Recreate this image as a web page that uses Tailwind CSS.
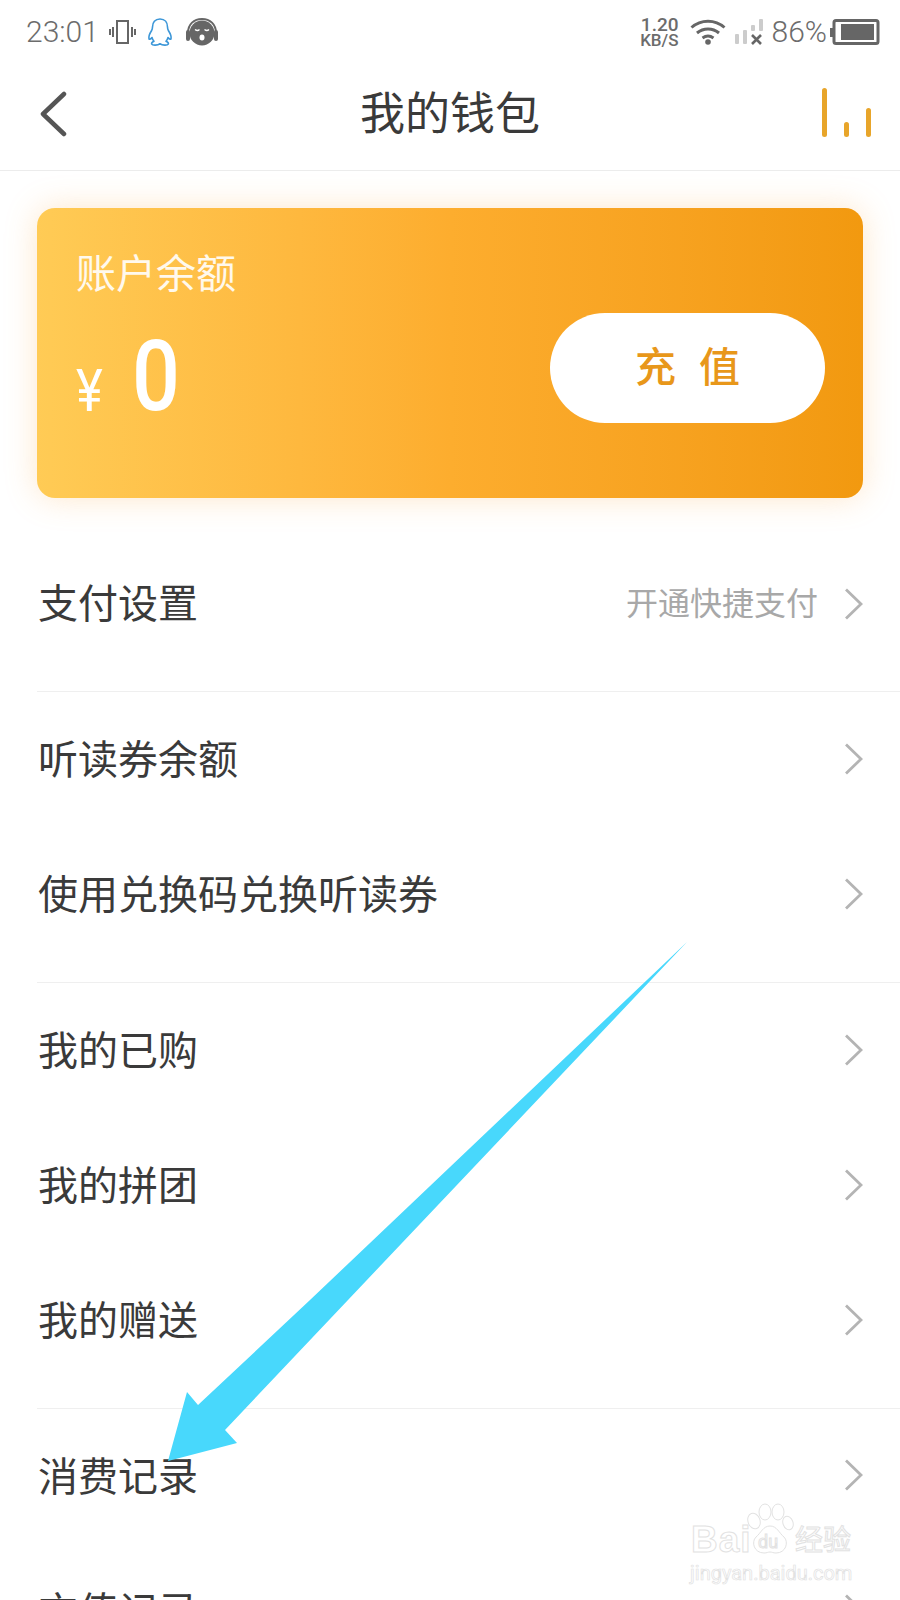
<!DOCTYPE html>
<html lang="zh">
<head>
  <meta charset="UTF-8" />
  <title>我的钱包</title>
  <script src="https://cdn.jsdelivr.net/npm/@tailwindcss/browser@4"></script>
</head>
<body class="bg-white">
<div class="relative w-[900px] h-[1600px] overflow-hidden bg-white text-[#3a3a3a] font-['Roboto','Noto_Sans_CJK_SC',sans-serif]">

  <!-- status bar -->
  <div class="h-[60px] flex items-center justify-between pl-[26px] pr-[20px] pt-[4px] text-[#6c6c6c]">
    <div class="flex items-center">
      <span class="text-[30px] font-light leading-none w-[83px]">23:01</span>
      <svg class="w-[27px] h-[24px]" viewBox="0 0 27 24" fill="none" stroke="#666" stroke-width="2">
        <rect x="8" y="1" width="11" height="22"/>
        <path d="M4 7v10M1 9v6M23 7v10M26 9v6"/>
      </svg>
      <svg class="w-[26px] h-[29px] ml-[11px]" viewBox="0 0 26 29" fill="none" stroke="#3d97d8" stroke-width="1.6" stroke-linejoin="round">
        <path d="M13 1c-5 0-7.500 3.500-7.500 8 0 1.500-.3 2.500-1 3.800-1.500 2.300-3 5.500-2.500 8 .5 1 2 .2 3-1.300.4 1.500 1 2.700 2 3.700-1.600.7-2.800 1.700-2.300 3 .8 1.300 6 1.300 8.300-.5 2.300 1.800 7.500 1.800 8.300.5.500-1.300-.7-2.300-2.300-3 1-1 1.600-2.200 2-3.700 1 1.500 2.500 2.300 3 1.300.5-2.500-1-5.700-2.500-8-.7-1.300-1-2.300-1-3.800 0-4.500-2.500-8-7.500-8z"/>
      </svg>
      <svg class="w-[32px] h-[28px] ml-[13px]" viewBox="0 0 32 28">
        <path d="M2 15C2 6 8 1 16 1s14 5 14 14" fill="none" stroke="#666" stroke-width="2"/>
        <rect x="0" y="12" width="4" height="11" rx="2" fill="#666"/>
        <rect x="28" y="12" width="4" height="11" rx="2" fill="#666"/>
        <circle cx="16" cy="15" r="12.500" fill="#666"/>
        <path d="M9 11.500q2.500 2 4.500 0M18.500 11.500q2.500 2 4.500 0" fill="none" stroke="#fff" stroke-width="1.300"/>
        <ellipse cx="16" cy="19.500" rx="2.500" ry="3" fill="#fff"/>
      </svg>
    </div>
    <div class="flex items-center">
      <div class="flex flex-col items-end font-medium mr-[11px]">
        <span class="text-[19px] leading-[16px]">1.20</span>
        <span class="text-[17px] leading-[15px]">KB/S</span>
      </div>
      <svg class="w-[36px] h-[26px]" viewBox="0 0 36 26" fill="none" stroke="#666" stroke-width="3">
        <path d="M1.500 8.500C11 0 25 0 34.500 8.500M7 14c6.500-5.500 15.500-5.500 22 0M12.500 19c3.500-2.500 7.500-2.500 11 0"/>
        <circle cx="18" cy="23" r="2.800" fill="#666" stroke="none"/>
      </svg>
      <svg class="w-[28px] h-[26px] ml-[9px]" viewBox="0 0 28 26">
        <rect x="0" y="15" width="4" height="10" rx="1" fill="#ccc"/>
        <rect x="8" y="11" width="4" height="14" rx="1" fill="#ccc"/>
        <rect x="16" y="6" width="4" height="6" rx="1" fill="#ccc"/>
        <rect x="24" y="0" width="4" height="12" rx="1" fill="#ccc"/>
        <path d="M17 16l9 9M26 16l-9 9" stroke="#666" stroke-width="2.600"/>
      </svg>
      <span class="text-[30px] font-light leading-none ml-[9px]">86%</span>
      <svg class="w-[50px] h-[26px] ml-[3px]" viewBox="0 0 50 26">
        <rect x="0" y="9" width="3" height="9" fill="#666"/>
        <rect x="4" y="1.500" width="44" height="23" rx="2" fill="none" stroke="#666" stroke-width="3"/>
        <rect x="11" y="5" width="33" height="16" fill="#666"/>
      </svg>
    </div>
  </div>

  <!-- nav -->
  <div class="h-[111px] border-b border-[#ececec] grid grid-cols-3 items-center px-[29px]">
    <svg class="w-[27px] h-[46px] ml-[11px] -mt-[2px]" viewBox="0 0 27 46" fill="none" stroke="#555" stroke-width="4.500" stroke-linecap="round" stroke-linejoin="round">
      <path d="M24 3L3 23l21 20"/>
    </svg>
    <h1 class="text-[45px] font-normal text-center whitespace-nowrap leading-none -mt-[1px]">我的钱包</h1>
    <div class="flex justify-end items-end gap-[17px] h-[49px] -mt-[6px]">
      <div class="w-[5px] h-[49px] rounded-full bg-[#e8a52a]"></div>
      <div class="w-[5px] h-[15px] rounded-full bg-[#e8a52a]"></div>
      <div class="w-[5px] h-[29px] rounded-full bg-[#e8a52a]"></div>
    </div>
  </div>

  <!-- balance card -->
  <div class="mx-[37px] mt-[37px] w-[826px] h-[290px] rounded-[18px] bg-linear-to-r from-[#ffcb55] via-[#fdad2e] to-[#f2990f] shadow-[0_0_32px_rgba(250,170,70,0.28)] flex items-start justify-between pl-[39px] pr-[38px] text-white">
    <div class="pt-[47px]">
      <div class="text-[40px] leading-[40px] text-white/90">账户余额</div>
      <div class="flex items-baseline mt-[31px] leading-[100px]">
        <span class="text-[60px] w-[56px] inline-block scale-x-[0.85] origin-left translate-y-[2px]">¥</span>
        <span class="text-[98px] font-medium inline-block scale-x-[0.86] origin-left translate-y-[1px]">0</span>
      </div>
    </div>
    <button class="mt-[105px] w-[275px] h-[110px] rounded-full bg-white text-[#e8971a] text-[41px] font-medium leading-none pl-[23px] tracking-[23px]">充值</button>
  </div>

  <!-- list -->
  <div class="mt-[38px] ml-[37px] pb-[20px] border-b border-[#efefef]">
    <div class="h-[135px] flex items-center justify-between pl-px pr-[37px]">
      <span class="text-[40px] pt-[3px]">支付设置</span>
      <div class="flex items-center gap-[26px]">
        <span class="text-[32px] text-[#a8a8a8]">开通快捷支付</span>
        <svg class="w-[19px] h-[32px]" viewBox="0 0 19 32" fill="none" stroke="#b4b4b4" stroke-width="2.800"><path d="M2 1.500L17 16 2 30.500"/></svg>
      </div>
    </div>
  </div>

  <div class="ml-[37px] pb-[20px] border-b border-[#efefef]">
    <div class="h-[135px] flex items-center justify-between pl-px pr-[37px]">
      <span class="text-[40px] pt-[3px]">听读券余额</span>
      <svg class="w-[19px] h-[32px] -mt-[2px]" viewBox="0 0 19 32" fill="none" stroke="#b4b4b4" stroke-width="2.800"><path d="M2 1.500L17 16 2 30.500"/></svg>
    </div>
    <div class="h-[135px] flex items-center justify-between pl-px pr-[37px]">
      <span class="text-[40px] pt-[3px]">使用兑换码兑换听读券</span>
      <svg class="w-[19px] h-[32px] -mt-[2px]" viewBox="0 0 19 32" fill="none" stroke="#b4b4b4" stroke-width="2.800"><path d="M2 1.500L17 16 2 30.500"/></svg>
    </div>
  </div>

  <div class="ml-[37px] pb-[20px] border-b border-[#efefef]">
    <div class="h-[135px] flex items-center justify-between pl-px pr-[37px]">
      <span class="text-[40px] pt-[3px]">我的已购</span>
      <svg class="w-[19px] h-[32px] -mt-[2px]" viewBox="0 0 19 32" fill="none" stroke="#b4b4b4" stroke-width="2.800"><path d="M2 1.500L17 16 2 30.500"/></svg>
    </div>
    <div class="h-[135px] flex items-center justify-between pl-px pr-[37px]">
      <span class="text-[40px] pt-[3px]">我的拼团</span>
      <svg class="w-[19px] h-[32px] -mt-[2px]" viewBox="0 0 19 32" fill="none" stroke="#b4b4b4" stroke-width="2.800"><path d="M2 1.500L17 16 2 30.500"/></svg>
    </div>
    <div class="h-[135px] flex items-center justify-between pl-px pr-[37px]">
      <span class="text-[40px] pt-[3px]">我的赠送</span>
      <svg class="w-[19px] h-[32px] -mt-[2px]" viewBox="0 0 19 32" fill="none" stroke="#b4b4b4" stroke-width="2.800"><path d="M2 1.500L17 16 2 30.500"/></svg>
    </div>
  </div>

  <div class="ml-[37px]">
    <div class="h-[135px] flex items-center justify-between pl-px pr-[37px]">
      <span class="text-[40px] pt-[3px]">消费记录</span>
      <svg class="w-[19px] h-[32px] -mt-[4px]" viewBox="0 0 19 32" fill="none" stroke="#b4b4b4" stroke-width="2.800"><path d="M2 1.500L17 16 2 30.500"/></svg>
    </div>
    <div class="h-[135px] flex items-center justify-between pl-px pr-[37px]">
      <span class="text-[40px] pt-[3px]">充值记录</span>
      <svg class="w-[19px] h-[32px] -mt-[4px]" viewBox="0 0 19 32" fill="none" stroke="#b4b4b4" stroke-width="2.800"><path d="M2 1.500L17 16 2 30.500"/></svg>
    </div>
  </div>

  <!-- annotation arrow -->
  <svg class="absolute left-0 top-0 w-[900px] h-[1600px] pointer-events-none" viewBox="0 0 900 1600">
    <polygon points="687,942 348,1300 225,1430 237,1443 168,1461 187,1392 198,1405 310,1300" fill="#48d8fc"/>
  </svg>

  <!-- watermark -->
  <div class="absolute left-[691px] top-[1503px] w-[165px] text-transparent [-webkit-text-stroke:1px_#e2e2e2] pointer-events-none">
    <div class="flex items-end h-[55px]">
      <span class="text-[37px] leading-[37px] font-bold font-['Liberation_Sans',sans-serif] w-[54px] tracking-[1px]">Bai</span>
      <div class="relative w-[50px] h-[55px] shrink-0">
        <svg class="absolute inset-0" viewBox="0 0 50 55" fill="none" stroke="#e2e2e2" stroke-width="1">
          <ellipse cx="9" cy="18" rx="6" ry="8" transform="rotate(-20 9 18)"/>
          <ellipse cx="20" cy="9" rx="6" ry="8"/>
          <ellipse cx="33" cy="9" rx="6" ry="8"/>
          <ellipse cx="43" cy="20" rx="5" ry="7" transform="rotate(-20 43 20)"/>
          <path d="M25 23c7 0 9 7 14 11 5 5 2 16-8 16-3 0-4-1-6-1s-3 1-6 1c-10 0-13-11-8-16 5-4 7-11 14-11z"/>
        </svg>
        <span class="absolute left-[13px] top-[30px] text-[18px] leading-[18px]">du</span>
      </div>
      <span class="text-[28px] leading-[34px] whitespace-nowrap">经验</span>
    </div>
    <div class="text-[20px] leading-[24px] mt-[3px] -ml-[1px] whitespace-nowrap [-webkit-text-stroke:0.7px_#e2e2e2]">jingyan.baidu.com</div>
  </div>
</div>
</body>
</html>
